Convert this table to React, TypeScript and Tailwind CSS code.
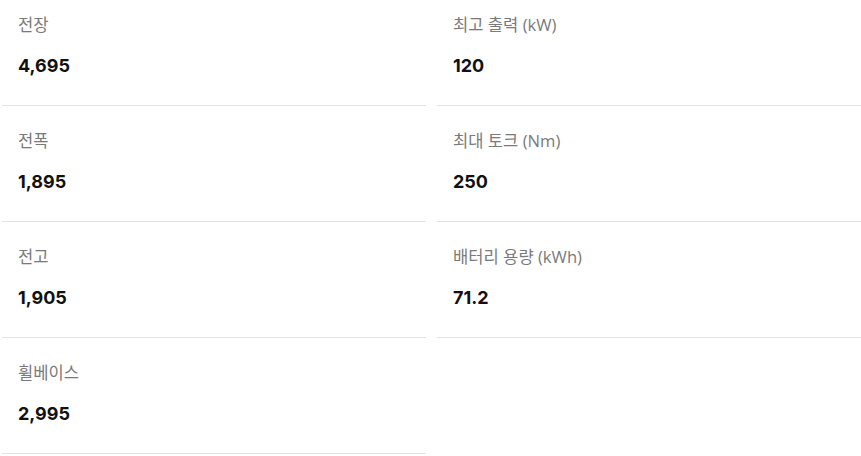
const specs = [
  { label: '전장', value: '4,695' },
  { label: '최고 출력 (kW)', value: '120' },
  { label: '전폭', value: '1,895' },
  { label: '최대 토크 (Nm)', value: '250' },
  { label: '전고', value: '1,905' },
  { label: '배터리 용량 (kWh)', value: '71.2' },
  { label: '휠베이스', value: '2,995' },
]

function SpecItem({ label, value }: { label: string; value: string }) {
  return (
    <div className="h-[116px] border-b border-[#e2e2e2] px-4 pt-[24px]">
      <div className="text-[16.6px] leading-[22px] text-[#7a7a7a]">{label}</div>
      <div className="mt-[18px] font-['Inter','Noto_Sans_CJK_KR',sans-serif] text-[18px] leading-6 font-bold text-[#111]">
        {value}
      </div>
    </div>
  )
}

export default function App() {
  return (
    <div className="h-[456px] overflow-hidden bg-white font-['Open_Sans','Noto_Sans_CJK_KR',sans-serif]">
      <div className="-mt-[10px] grid grid-cols-2 gap-x-[11px] pl-[2px]">
        {specs.map((s) => (
          <SpecItem key={s.label} label={s.label} value={s.value} />
        ))}
      </div>
    </div>
  )
}
